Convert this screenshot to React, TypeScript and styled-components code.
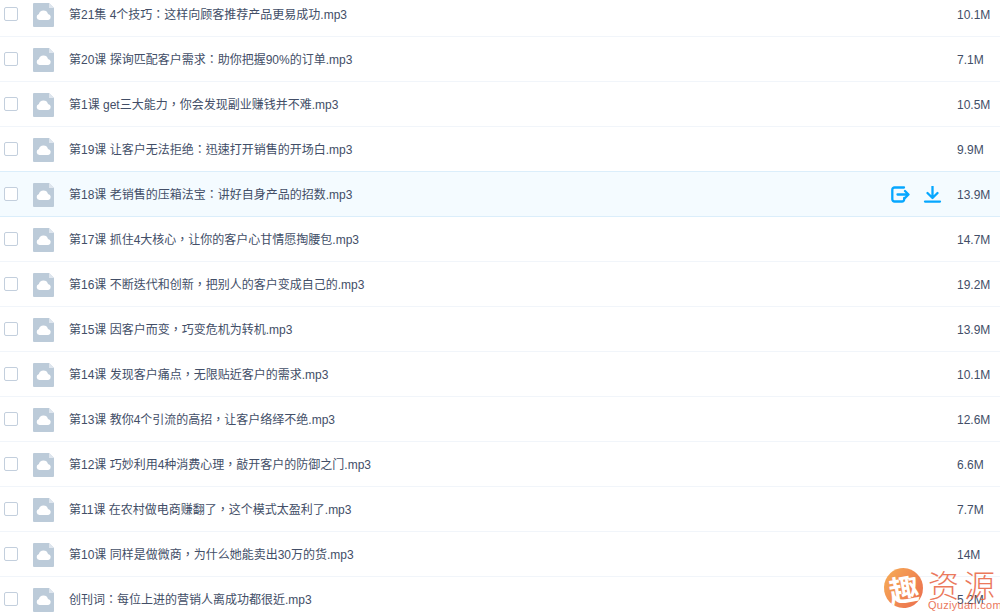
import React from 'react';
import styled, { createGlobalStyle } from 'styled-components';

const GlobalStyle = createGlobalStyle`
  html, body {
    margin: 0;
    padding: 0;
    height: 612px;
    overflow: hidden;
    background: #ffffff;
  }
`;

const Page = styled.div`
  position: relative;
  width: 1000px;
  height: 612px;
  overflow: hidden;
  font-family: 'Noto Sans CJK TC', 'Liberation Sans', sans-serif;
`;

const List = styled.ul`
  list-style: none;
  margin: -8px 0 0;
  padding: 0;
`;

const Row = styled.li<{ $active?: boolean }>`
  display: flex;
  align-items: center;
  box-sizing: border-box;
  height: 45px;
  padding: 0 0 0 4px;
  border-bottom: 1px solid ${(p) => (p.$active ? '#dbeefb' : '#f1f5fa')};
  background: ${(p) => (p.$active ? '#f4fbff' : '#ffffff')};
  box-shadow: ${(p) => (p.$active ? '0 -1px 0 #dbeefb' : 'none')};
`;

const Check = styled.span`
  flex: none;
  box-sizing: border-box;
  width: 14px;
  height: 14px;
  border: 1px solid #c3cfdd;
  border-radius: 2px;
  background: #ffffff;
`;

const FileIconBox = styled.svg`
  flex: none;
  width: 21px;
  height: 24px;
  margin-left: 15px;
  margin-top: 1px;
`;

const Name = styled.span`
  flex: 1;
  margin-left: 15px;
  margin-top: 1px;
  font-size: 12px;
  line-height: 16px;
  color: #424e67;
  white-space: nowrap;
  font-family: 'Liberation Sans', 'Noto Sans CJK TC', sans-serif;
`;

const Actions = styled.div`
  display: flex;
  align-items: center;
  gap: 13px;
  margin-right: 15px;
`;

const ActionIcon = styled.svg`
  display: block;
  width: 19px;
  height: 17px;
  fill: none;
  stroke: #06a7ff;
  stroke-width: 2.3;
`;

const Size = styled.span`
  flex: none;
  width: 43px;
  margin-top: 1px;
  font-size: 12px;
  line-height: 16px;
  color: #424e67;
  font-family: 'Liberation Sans', sans-serif;
`;

const Watermark = styled.div`
  position: absolute;
  left: 884px;
  top: 568px;
  display: flex;
  align-items: flex-start;
  gap: 5px;
  opacity: 0.85;
`;

const Badge = styled.div`
  width: 39px;
  height: 40px;
  border-radius: 50%;
  background: linear-gradient(135deg, #f6a13a, #e8522f);
  color: #ffffff;
  font-size: 30px;
  line-height: 40px;
  text-align: center;
  font-weight: 700;
  transform: rotate(-10deg);
`;

const Brand = styled.div`
  display: flex;
  flex-direction: column;
  color: #e8623f;
`;

const BrandName = styled.span`
  font-size: 31px;
  line-height: 32px;
  letter-spacing: 5px;
  white-space: nowrap;
  font-weight: 300;
`;

const BrandUrl = styled.span`
  font-size: 11px;
  line-height: 11px;
  letter-spacing: 0.3px;
  font-family: 'Liberation Sans', sans-serif;
`;

const FileIcon = () => (
  <FileIconBox viewBox="0 0 21 24">
    <path d="M1 0h15l5 5v18a1 1 0 0 1-1 1H1a1 1 0 0 1-1-1V1a1 1 0 0 1 1-1z" fill="#bccbd9" />
    <path d="M16 0l5 5h-5z" fill="#dfe6ee" />
    <path
      d="M6.5 17a3 3 0 0 1-.6-5.9 4.7 4.7 0 0 1 9.1-.2 3.1 3.1 0 0 1 .3 6.1z"
      fill="#ffffff"
    />
  </FileIconBox>
);

const OpenIcon = () => (
  <ActionIcon viewBox="0 0 19 17">
    <path d="M13 1.5H3.5a2.2 2.2 0 0 0-2.2 2.2v9.6a2.2 2.2 0 0 0 2.2 2.2H11a2.2 2.2 0 0 0 2.2-2.2V12" strokeLinecap="round" />
    <path d="M6.5 8.5h10.8M14 5l3.5 3.5L14 12" strokeLinecap="round" strokeLinejoin="round" />
  </ActionIcon>
);

const DownloadIcon = () => (
  <ActionIcon viewBox="0 0 19 17">
    <path d="M9.5 0.5v10.5M4.5 7l5 5 5-5" strokeLinecap="round" strokeLinejoin="round" />
    <path d="M2 15.6h15" strokeLinecap="round" />
  </ActionIcon>
);

const files = [
  { name: '第21集 4个技巧：这样向顾客推荐产品更易成功.mp3', size: '10.1M' },
  { name: '第20课 探询匹配客户需求：助你把握90%的订单.mp3', size: '7.1M' },
  { name: '第1课 get三大能力，你会发现副业赚钱并不难.mp3', size: '10.5M' },
  { name: '第19课 让客户无法拒绝：迅速打开销售的开场白.mp3', size: '9.9M' },
  { name: '第18课 老销售的压箱法宝：讲好自身产品的招数.mp3', size: '13.9M', active: true },
  { name: '第17课 抓住4大核心，让你的客户心甘情愿掏腰包.mp3', size: '14.7M' },
  { name: '第16课 不断迭代和创新，把别人的客户变成自己的.mp3', size: '19.2M' },
  { name: '第15课 因客户而变，巧变危机为转机.mp3', size: '13.9M' },
  { name: '第14课 发现客户痛点，无限贴近客户的需求.mp3', size: '10.1M' },
  { name: '第13课 教你4个引流的高招，让客户络绎不绝.mp3', size: '12.6M' },
  { name: '第12课 巧妙利用4种消费心理，敲开客户的防御之门.mp3', size: '6.6M' },
  { name: '第11课 在农村做电商赚翻了，这个模式太盈利了.mp3', size: '7.7M' },
  { name: '第10课 同样是做微商，为什么她能卖出30万的货.mp3', size: '14M' },
  { name: '创刊词：每位上进的营销人离成功都很近.mp3', size: '5.2M' },
];

const App = () => (
  <Page>
    <GlobalStyle />
    <List>
      {files.map((file) => (
        <Row key={file.name} $active={file.active}>
          <Check />
          <FileIcon />
          <Name>{file.name}</Name>
          {file.active && (
            <Actions>
              <OpenIcon />
              <DownloadIcon />
            </Actions>
          )}
          <Size>{file.size}</Size>
        </Row>
      ))}
    </List>
    <Watermark>
      <Badge>趣</Badge>
      <Brand>
        <BrandName>资源</BrandName>
        <BrandUrl>Quziyuan.com</BrandUrl>
      </Brand>
    </Watermark>
  </Page>
);

export default App;
